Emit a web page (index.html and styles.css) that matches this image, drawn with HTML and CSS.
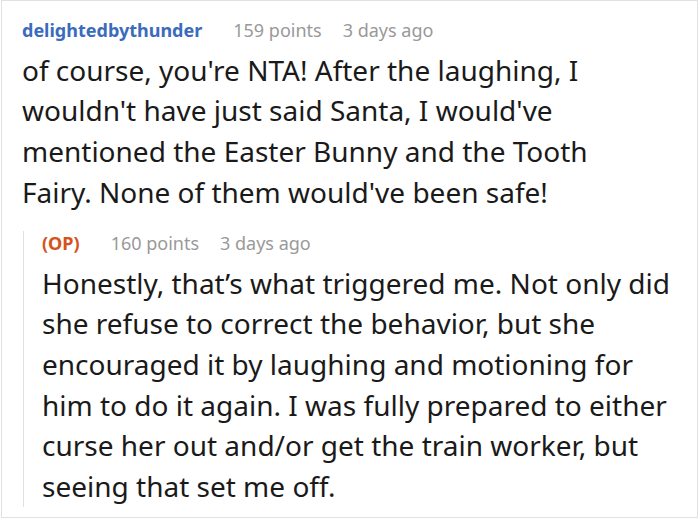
FILE: index.html
```html
<!DOCTYPE html>
<html>
<head>
<meta charset="utf-8">
<link rel="stylesheet" href="styles.css">
</head>
<body>
<div class="frame">
  <div class="comment">
    <div class="meta">
      <span class="user">delightedbythunder</span>
      <span class="info points">159 points</span>
      <span class="info">3 days ago</span>
    </div>
    <p class="text main-text">of course, you're NTA! After the laughing, I wouldn't have just said Santa, I would've mentioned the Easter Bunny and the Tooth Fairy. None of them would've been safe!</p>
    <div class="reply">
      <div class="meta reply-meta">
        <span class="op">(OP)</span>
        <span class="info points">160 points</span>
        <span class="info">3 days ago</span>
      </div>
      <p class="text reply-text">Honestly, that’s what triggered me. Not only did she refuse to correct the behavior, but she encouraged it by laughing and motioning for him to do it again. I was fully prepared to either curse her out and/or get the train worker, but seeing that set me off.</p>
    </div>
  </div>
</div>
</body>
</html>
```

FILE: styles.css
```css
html, body {
  margin: 0;
  padding: 0;
  background: #ffffff;
}
.frame {
  width: 695px;
  height: 516px;
  margin-left: 1px;
  border: 1px solid #e2e2e2;
  overflow: hidden;
  font-family: "Noto Sans", sans-serif;
}
.comment {
  padding: 17px 0 0 20px;
}
.meta {
  display: flex;
  align-items: baseline;
  font-size: 18px;
  line-height: 24px;
}
.user {
  font-weight: bold;
  color: #3a6bbd;
}
.op {
  font-weight: bold;
  color: #d4541c;
}
.info {
  color: #999999;
  margin-left: 21px;
}
.points {
  margin-left: 31px;
}
.text {
  margin: 0;
  font-size: 28px;
  line-height: 40.7px;
  color: #1a1a1a;
}
.main-text {
  margin-top: 7.6px;
  width: 609px;
}
.reply {
  margin-top: 30.6px;
  margin-left: 1px;
  border-left: 1px solid #e0e0e0;
  padding-left: 18px;
}
.reply-meta {
  margin-top: -12px;
}
.reply-text {
  margin-top: 7.6px;
  width: 637px;
}
```
